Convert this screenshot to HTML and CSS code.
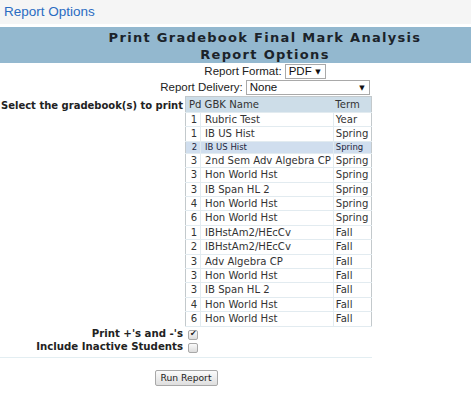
FILE: index.html
```html
<!doctype html>
<html>
  <head>
    <meta charset="utf-8">
    <meta name="viewport" content="width=device-width, initial-scale=1.0"/>
    <title>Report Options</title>
    <link rel="stylesheet" href="styles.css">
  </head>
  <body>
    <div class="topbar">
      <a href="#">Report Options</a>
    </div>
    <div class="page">
      <h1>Print Gradebook Final Mark Analysis<br>Report Options</h1>

      <div class="field">
        <label>Report Format:</label>
        <span class="select format"><select><option>PDF</option></select></span>
      </div>
      <div class="field">
        <label>Report Delivery:</label>
        <span class="select delivery"><select><option>None</option></select></span>
      </div>

      <div class="form">
        <div class="row">
          <div class="label">Select the gradebook(s) to print</div>
          <div class="value">
            <table class="gbk">
              <colgroup>
                <col class="c-pd">
                <col class="c-name">
                <col class="c-term">
              </colgroup>
              <thead>
                <tr><th class="pd">Pd</th><th>GBK Name</th><th class="term">Term</th></tr>
              </thead>
              <tbody>
                <tr><td class="pd">1</td><td>Rubric Test</td><td class="term">Year</td></tr>
                <tr><td class="pd">1</td><td>IB US Hist</td><td class="term">Spring</td></tr>
                <tr class="selected"><td class="pd">2</td><td>IB US Hist</td><td class="term">Spring</td></tr>
                <tr><td class="pd">3</td><td>2nd Sem Adv Algebra CP</td><td class="term">Spring</td></tr>
                <tr><td class="pd">3</td><td>Hon World Hst</td><td class="term">Spring</td></tr>
                <tr><td class="pd">3</td><td>IB Span HL 2</td><td class="term">Spring</td></tr>
                <tr><td class="pd">4</td><td>Hon World Hst</td><td class="term">Spring</td></tr>
                <tr><td class="pd">6</td><td>Hon World Hst</td><td class="term">Spring</td></tr>
                <tr><td class="pd">1</td><td>IBHstAm2/HEcCv</td><td class="term">Fall</td></tr>
                <tr><td class="pd">2</td><td>IBHstAm2/HEcCv</td><td class="term">Fall</td></tr>
                <tr><td class="pd">3</td><td>Adv Algebra CP</td><td class="term">Fall</td></tr>
                <tr><td class="pd">3</td><td>Hon World Hst</td><td class="term">Fall</td></tr>
                <tr><td class="pd">3</td><td>IB Span HL 2</td><td class="term">Fall</td></tr>
                <tr><td class="pd">4</td><td>Hon World Hst</td><td class="term">Fall</td></tr>
                <tr><td class="pd">6</td><td>Hon World Hst</td><td class="term">Fall</td></tr>
              </tbody>
            </table>
          </div>
        </div>
        <div class="row check">
          <div class="label">Print +'s and -'s</div>
          <div class="value"><input type="checkbox" checked></div>
        </div>
        <div class="row check">
          <div class="label">Include Inactive Students</div>
          <div class="value"><input type="checkbox"></div>
        </div>
        <div class="actions">
          <button>Run Report</button>
        </div>
      </div>
    </div>
  </body>
</html>
```

FILE: styles.css
```css
html, body {
  margin: 0;
  padding: 0;
  background: #fff;
}

* {
  font-family: 'DejaVu Sans', Verdana, sans-serif;
}

.topbar {
  height: 24px;
  padding-left: 4px;
  background: #f5f5f5;
}
.topbar a {
  font: 13.5px/24px 'Liberation Sans', Arial, sans-serif;
  color: #2a6cc2;
  text-decoration: none;
}

h1 {
  margin: 3px 0 0;
  padding: 2px 0 0 59px;
  height: 34px;
  background: #93b8cf;
  color: #1b232a;
  text-align: center;
  white-space: nowrap;
  font-size: 13px;
  line-height: 17px;
  font-weight: bold;
  letter-spacing: 1.3px;
}

.field {
  display: flex;
  justify-content: center;
  align-items: center;
  gap: 3px;
  height: 16px;
  padding-left: 59px;
}
.field label {
  font: 11.5px 'Liberation Sans', Arial, sans-serif;
  color: #222;
}

.select {
  position: relative;
  display: inline-block;
}
.select select {
  appearance: none;
  -webkit-appearance: none;
  display: block;
  height: 15px;
  margin: 0;
  padding: 0 0 0 3px;
  border: 1px solid #a9a9a9;
  border-radius: 0;
  background: #fff;
  font: 11.5px/13px 'Liberation Sans', Arial, sans-serif;
  color: #111;
}
.select::after {
  content: "\25BC";
  position: absolute;
  right: 5px;
  top: 4px;
  font-size: 7px;
  color: #111;
}
.format select {
  width: 41px;
}
.delivery select {
  width: 124px;
}

.form {
  width: 372px;
  margin-top: 1px;
}

.row {
  display: grid;
  grid-template-columns: 185px 1fr;
}
.row .label {
  text-align: right;
  font-size: 10px;
  font-weight: bold;
  color: #222;
  padding: 4px 2px 0 0;
}

table.gbk {
  width: 187px;
  table-layout: fixed;
  border-collapse: collapse;
  border: 1px solid #c3c9cc;
}
.c-pd { width: 15px; }
.c-name { width: 132px; }
.c-term { width: 38px; }

.gbk th, .gbk td {
  padding: 0 0 0 4px;
  font-size: 10.1px;
  font-weight: normal;
  line-height: 13.4px;
  text-align: left;
  color: #333;
  white-space: nowrap;
  border-bottom: 1px solid #e2ebf0;
  border-left: 1px solid #e2ebf0;
}
.gbk th {
  background: #cddde8;
  line-height: 15px;
  border-left: none;
}
.gbk .pd {
  padding: 0 3px 0 0;
  text-align: right;
  border-left: none;
}
.gbk th.pd {
  padding: 0 0 0 3px;
  text-align: left;
  overflow: visible;
}
.gbk .term {
  padding-left: 2px;
  overflow: hidden;
}
.gbk tr.selected td {
  background: #d0deee;
  font-size: 8.5px;
  line-height: 11px;
  color: #1c2540;
}

.row.check .label {
  padding-top: 1px;
  font-size: 10.2px;
}
.row.check .value {
  padding: 3px 0 0 3px;
}

input[type=checkbox] {
  appearance: none;
  -webkit-appearance: none;
  position: relative;
  display: block;
  width: 10px;
  height: 10px;
  margin: 0;
  border: 1px solid #a8a8a8;
  border-radius: 2px;
  background: linear-gradient(#fafafa, #dcdcdc);
}
input[type=checkbox]:checked::after {
  content: "\2714";
  position: absolute;
  left: 1px;
  top: -2px;
  font-size: 8px;
  color: #222;
}

.actions {
  display: flex;
  justify-content: center;
  margin-top: 4px;
  padding-top: 12px;
  border-top: 1px solid #e3eef2;
}
.actions button {
  height: 16px;
  padding: 0 5px;
  border: 1px solid #a8a8a8;
  border-radius: 2px;
  background: linear-gradient(#fbfbfb, #dedede);
  font-size: 9.2px;
  line-height: 14px;
  color: #222;
}
```
